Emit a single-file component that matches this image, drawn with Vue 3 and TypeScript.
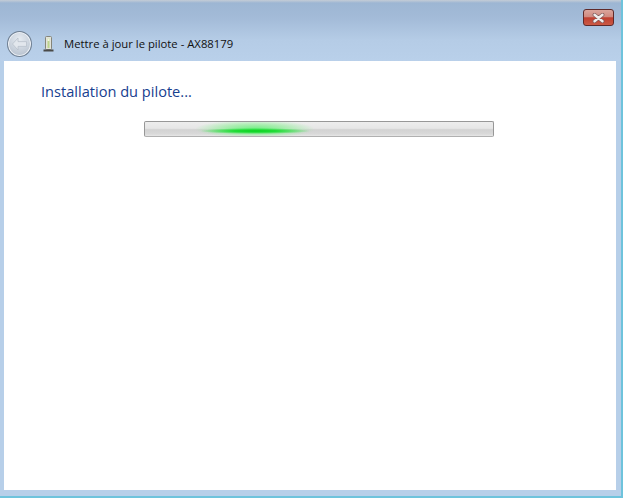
<script setup lang="ts">
const title = "Mettre à jour le pilote - AX88179";
const heading = "Installation du pilote...";
</script>

<template>
  <div class="window">
    <header class="chrome">
      <div class="caption">
        <button class="close" aria-label="Fermer">
          <svg width="15" height="10" viewBox="0 0 15 10">
            <path d="M3.5 1.8 L11.5 8.2 M11.5 1.8 L3.5 8.2" stroke="#7d5a5a" stroke-width="3.8" stroke-linecap="round" fill="none" />
            <path d="M3.5 1.8 L11.5 8.2 M11.5 1.8 L3.5 8.2" stroke="#f1eceb" stroke-width="2.4" stroke-linecap="round" fill="none" />
          </svg>
        </button>
      </div>
      <div class="nav">
        <div class="back">
          <svg width="17" height="14" viewBox="0 0 17 14">
            <path d="M7 1 L1.5 7 L7 13 L7 9.4 L15.5 9.4 L15.5 4.6 L7 4.6 Z" fill="#e2e7ed" stroke="#b4bdc9" stroke-width="0.7" stroke-linejoin="round" />
          </svg>
        </div>
        <svg class="device" width="11" height="16" viewBox="0 0 11 16">
          <rect x="2.5" y="0.5" width="6" height="13" rx="1" fill="#e2e3da" stroke="#85857a" />
          <rect x="4.5" y="2.5" width="2" height="9.5" fill="#bcd48c" />
          <rect x="4.5" y="2.5" width="2" height="2.5" fill="#f0f5dc" />
          <rect x="0.5" y="13.5" width="10" height="2" fill="#4a4a48" />
        </svg>
        <span class="title">{{ title }}</span>
      </div>
    </header>
    <main class="content">
      <h1 class="heading">{{ heading }}</h1>
      <div class="progress">
        <div class="glow"></div>
        <div class="core"></div>
      </div>
    </main>
    <div class="bottom-edge"></div>
  </div>
</template>

<style>
html, body { margin: 0; background: #fff; }
</style>

<style scoped>
.window {
  width: 623px;
  height: 498px;
  display: flex;
  flex-direction: column;
  overflow: hidden;
  background: #b7cfe9;
  border-right: 2px solid #6ec3dc;
  box-sizing: border-box;
  font-family: "Open Sans", "Noto Sans", sans-serif;
}
.chrome {
  height: 61px;
  flex: none;
  background: linear-gradient(180deg, #c4ccd6 0, #9db6d3 3px, #a3bbd8 18px, #b5cce6 40px, #b9d0ea 61px);
}
.caption {
  height: 28px;
  box-sizing: border-box;
  padding: 9px 7px 0 0;
  display: flex;
  justify-content: flex-end;
}
.close {
  width: 31px;
  height: 17px;
  padding: 0;
  box-sizing: border-box;
  border: 1px solid #5f2a2a;
  border-radius: 3px;
  background: linear-gradient(180deg, #dba59c 0, #d08a80 45%, #bf3f30 52%, #cb5a45 100%);
  display: flex;
  align-items: center;
  justify-content: center;
}
.nav {
  display: flex;
  align-items: center;
  height: 32px;
  padding-left: 7px;
}
.back {
  width: 25px;
  height: 26px;
  box-sizing: border-box;
  border: 1px solid #6f7f92;
  border-radius: 50%;
  background: radial-gradient(circle at 50% 30%, #e6ebf1 0, #c5ced9 60%, #aeb9c8 100%);
  box-shadow: inset 0 0 0 1px #eef2f6;
  display: flex;
  align-items: center;
  justify-content: center;
  flex: none;
}
.device {
  margin-left: 11px;
  flex: none;
}
.title {
  margin-left: 10px;
  padding-bottom: 2px;
  font-size: 11.3px;
  color: #111;
  white-space: nowrap;
}
.content {
  flex: 1;
  margin: 0 5px 6px 4px;
  background: #fff;
  padding: 20px 0 0 37px;
}
.heading {
  margin: 0;
  font-size: 14.6px;
  line-height: 20px;
  font-weight: 400;
  color: #17408f;
  white-space: nowrap;
}
.progress {
  position: relative;
  width: 350px;
  height: 16px;
  margin: 20px 0 0 103px;
  box-sizing: border-box;
  border: 1px solid #979797;
  border-bottom-color: #b0b0b0;
  border-radius: 2px;
  overflow: hidden;
  background: linear-gradient(180deg, #ededed 0, #e6e6e6 45%, #d2d2d2 55%, #d9d9d9 85%, #e6e6e6 100%);
}
.glow {
  position: absolute;
  left: 50px;
  top: -2px;
  width: 120px;
  height: 18px;
  background: radial-gradient(ellipse closest-side at center, rgba(100, 240, 120, 0.9) 0, rgba(130, 240, 140, 0.55) 55%, rgba(130, 240, 140, 0) 100%);
}
.core {
  position: absolute;
  left: 55px;
  top: 6px;
  width: 110px;
  height: 6px;
  background: radial-gradient(ellipse closest-side at center, #06d21c 0, #20dc36 40%, rgba(60, 225, 80, 0) 100%);
}
.bottom-edge {
  height: 2px;
  flex: none;
  background: #6ec3dc;
}
</style>
